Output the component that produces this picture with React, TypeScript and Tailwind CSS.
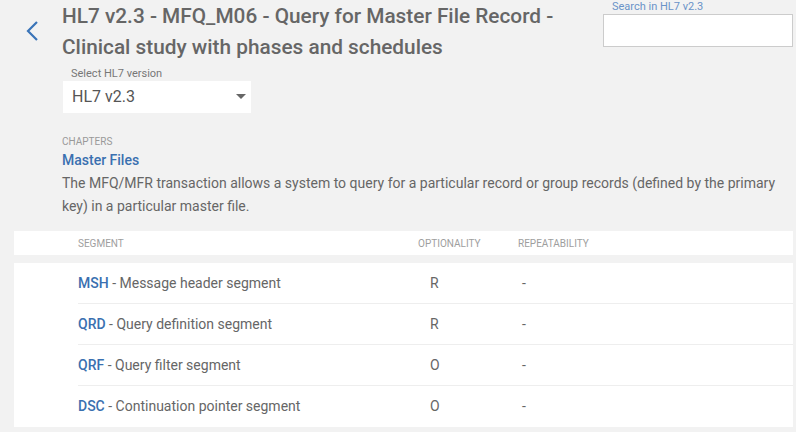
import React from 'react';

const segments = [
  { code: 'MSH', name: 'Message header segment', opt: 'R', rep: '-' },
  { code: 'QRD', name: 'Query definition segment', opt: 'R', rep: '-' },
  { code: 'QRF', name: 'Query filter segment', opt: 'O', rep: '-' },
  { code: 'DSC', name: 'Continuation pointer segment', opt: 'O', rep: '-' },
];

export default function App() {
  return (
    <div className="w-[796px] h-[432px] overflow-hidden bg-[#f2f2f2] text-[#666] font-['Roboto',sans-serif]">
      {/* Header */}
      <div className="flex">
        <div className="w-[62px] pl-[25px] pt-[20px] shrink-0">
          <svg width="14" height="22" viewBox="0 0 14 22">
            <polyline points="12,2 3,11 12,20" fill="none" stroke="#3a74b8" strokeWidth="2.2" />
          </svg>
        </div>
        <div className="flex-1 pt-[1px] pr-[20px]">
          <h1 className="text-[20.8px] leading-[31px] font-medium text-[#666]">
            HL7 v2.3 - MFQ_M06 - Query for Master File Record - Clinical study with phases and schedules
          </h1>
          <div className="mt-[4px] ml-[9px] text-[11px] leading-[14px] text-[#777]">Select HL7 version</div>
          <div className="ml-[1px] w-[188px] h-[32px] bg-white flex items-center justify-between pl-[9px] pr-[5px]">
            <span className="text-[16px] text-[#555]">HL7 v2.3</span>
            <svg width="10" height="6" viewBox="0 0 10 6">
              <polygon points="0,0 10,0 5,5" fill="#666" />
            </svg>
          </div>
        </div>
        <div className="w-[190px] mr-[3px] shrink-0">
          <div className="pl-[9px] text-[11px] leading-[14px] text-[#6a93c8]">Search in HL7 v2.3</div>
          <div className="h-[33px] bg-white border border-[#ccc]" />
        </div>
      </div>

      {/* Chapter */}
      <div className="pl-[62px] pr-[10px] mt-[23px]">
        <div className="text-[10px] leading-[12px] uppercase text-[#999]">Chapters</div>
        <div className="mt-[2px] text-[14px] leading-[20px] font-medium text-[#3a70b0]">Master Files</div>
        <p className="mt-[2px] text-[14px] leading-[23px] text-[#666]">
          The MFQ/MFR transaction allows a system to query for a particular record or group records (defined by the primary key) in a particular master file.
        </p>
      </div>

      {/* Table */}
      <div className="ml-[14px] w-[779px] mt-[13px]">
        <div className="h-[24px] bg-white flex items-center text-[10px] uppercase text-[#9e9e9e]">
          <div className="w-[404px] pl-[64px]">Segment</div>
          <div className="w-[100px]">Optionality</div>
          <div>Repeatability</div>
        </div>
        <div className="mt-[8px] bg-white pl-[64px]">
          {segments.map((s, i) => (
            <div
              key={s.code}
              className={`h-[41px] flex items-center text-[14px] ${i < segments.length - 1 ? 'border-b border-[#eee]' : ''}`}
            >
              <div className="w-[352px]">
                <span className="font-medium text-[#3a70b0]">{s.code}</span>
                <span className="text-[#666]"> - {s.name}</span>
              </div>
              <div className="w-[92px] text-[#666]">{s.opt}</div>
              <div className="text-[#666]">{s.rep}</div>
            </div>
          ))}
        </div>
      </div>
    </div>
  );
}
